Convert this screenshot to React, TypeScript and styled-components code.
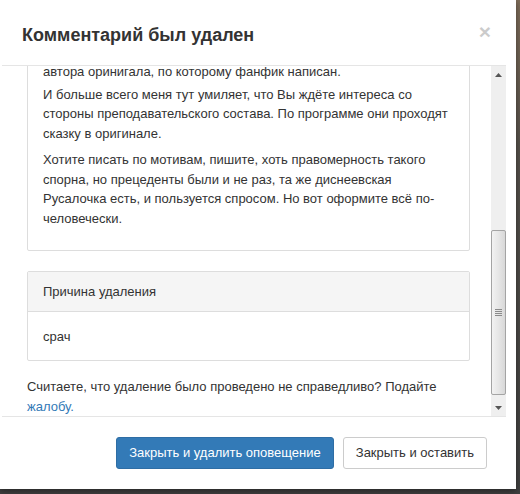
import React from 'react';
import styled, { createGlobalStyle } from 'styled-components';

const GlobalStyle = createGlobalStyle`
  html, body {
    margin: 0;
    padding: 0;
    background: #4b4b4b;
  }
  body {
    font-family: "Liberation Sans", Arial, sans-serif;
    font-size: 13px;
    line-height: 19.5px;
    color: #333;
  }
`;

const Backdrop = styled.div`
  width: 520px;
  height: 494px;
  background: linear-gradient(180deg, #7d6b58 0%, #55504a 30%, #3f3f3f 100%);
  overflow: hidden;
`;

const Modal = styled.div`
  width: 516px;
  height: 489px;
  background: #fff;
  display: flex;
  flex-direction: column;
  box-shadow: 0 2px 6px rgba(0, 0, 0, 0.4);
`;

const Header = styled.div`
  height: 65px;
  display: flex;
  align-items: center;
  justify-content: space-between;
  padding: 4px 25px 0 22px;
  box-sizing: border-box;
`;

const Title = styled.h4`
  margin: 0;
  font-size: 18px;
  font-weight: bold;
  color: #333;
  line-height: 22px;
`;

const Close = styled.button`
  border: 0;
  background: none;
  padding: 0;
  margin-top: -6px;
  font-family: "Liberation Sans", Arial, sans-serif;
  font-size: 21px;
  font-weight: bold;
  line-height: 1;
  color: #000;
  opacity: 0.2;
  cursor: pointer;
`;

const ScrollFrame = styled.div`
  display: flex;
  height: 350px;
  width: 504px;
  margin-left: 2px;
  border-top: 1px solid #e5e5e5;
  border-bottom: 1px solid #e5e5e5;
`;

const ScrollContent = styled.div`
  flex: 1;
  overflow: hidden;
  display: flex;
  flex-direction: column;
  justify-content: flex-end;
  padding: 0 21px 0 25px;

  & > * {
    flex-shrink: 0;
  }
`;

const Panel = styled.div<{ $gap: number }>`
  border: 1px solid #ddd;
  border-radius: 2px;
  margin-bottom: ${p => p.$gap}px;
  background: #fff;
`;

const PanelBody = styled.div<{ $bottom?: number }>`
  padding: 15px 15px ${p => p.$bottom ?? 14}px;
`;

const Para = styled.p<{ $gap?: number }>`
  margin: 0 0 ${p => p.$gap ?? 7}px;
`;

const PanelHeading = styled.div`
  padding: 10px 15px 9px;
  background: #f5f5f5;
  border-bottom: 1px solid #ddd;
`;

const Note = styled.p`
  margin: 0;
`;

const Link = styled.a`
  color: #337ab7;
  text-decoration: none;
`;

const Scrollbar = styled.div`
  width: 15px;
  display: flex;
  flex-direction: column;
  background: #efefef;
`;

const ArrowButton = styled.div`
  height: 17px;
  display: flex;
  align-items: center;
  justify-content: center;
`;

const Track = styled.div`
  flex: 1;
  display: flex;
  flex-direction: column;
  justify-content: flex-end;
  padding-bottom: 4px;
`;

const Thumb = styled.div`
  height: 165px;
  box-sizing: border-box;
  border: 1px solid #a4a4a4;
  border-radius: 2px;
  background: linear-gradient(90deg, #f2f2f2 0%, #e6e6e6 50%, #d8d8d8 100%);
  display: flex;
  align-items: center;
  justify-content: center;
`;

const Footer = styled.div`
  flex: 1;
  display: flex;
  justify-content: flex-end;
  align-items: flex-start;
  gap: 9px;
  padding: 20px 29px 0 0;
`;

const Button = styled.button<{ $primary?: boolean }>`
  height: 32px;
  padding: 0 12px;
  font-family: "Liberation Sans", Arial, sans-serif;
  font-size: 13px;
  line-height: 18px;
  border-radius: 3px;
  border: 1px solid ${p => (p.$primary ? '#2e6da4' : '#ccc')};
  background: ${p => (p.$primary ? '#337ab7' : '#fff')};
  color: ${p => (p.$primary ? '#fff' : '#333')};
  cursor: pointer;
`;

const Arrow = ({ down }: { down?: boolean }) => (
  <svg width="7" height="4" viewBox="0 0 7 4">
    <path d={down ? 'M0 0H7L3.5 4Z' : 'M0 4H7L3.5 0Z'} fill="#555" />
  </svg>
);

const Grip = () => (
  <svg width="7" height="7" viewBox="0 0 7 7">
    <path d="M0 0.5H7M0 2.5H7M0 4.5H7M0 6.5H7" stroke="#8a8a8a" strokeWidth="1" />
  </svg>
);

export default function App() {
  return (
    <>
      <GlobalStyle />
      <Backdrop>
        <Modal>
          <Header>
            <Title>Комментарий был удален</Title>
            <Close aria-label="Закрыть">×</Close>
          </Header>
          <ScrollFrame>
            <ScrollContent>
              <Panel $gap={20}>
                <PanelBody $bottom={15}>
                  <Para $gap={3}>автора оринигала, по которому фанфик написан.</Para>
                  <Para>
                    И больше всего меня тут умиляет, что Вы ждёте интереса со<br />
                    стороны преподавательского состава. По программе они проходят<br />
                    сказку в оригинале.
                  </Para>
                  <Para>
                    Хотите писать по мотивам, пишите, хоть правомерность такого<br />
                    спорна, но прецеденты были и не раз, та же диснеевская<br />
                    Русалочка есть, и пользуется спросом. Но вот оформите всё по-<br />
                    человечески.
                  </Para>
                </PanelBody>
              </Panel>
              <Panel $gap={16}>
                <PanelHeading>Причина удаления</PanelHeading>
                <PanelBody>срач</PanelBody>
              </Panel>
              <Note>
                Считаете, что удаление было проведено не справедливо? Подайте<br />
                <Link href="#">жалобу.</Link>
              </Note>
            </ScrollContent>
            <Scrollbar>
              <ArrowButton>
                <Arrow />
              </ArrowButton>
              <Track>
                <Thumb>
                  <Grip />
                </Thumb>
              </Track>
              <ArrowButton>
                <Arrow down />
              </ArrowButton>
            </Scrollbar>
          </ScrollFrame>
          <Footer>
            <Button $primary>Закрыть и удалить оповещение</Button>
            <Button>Закрыть и оставить</Button>
          </Footer>
        </Modal>
      </Backdrop>
    </>
  );
}
